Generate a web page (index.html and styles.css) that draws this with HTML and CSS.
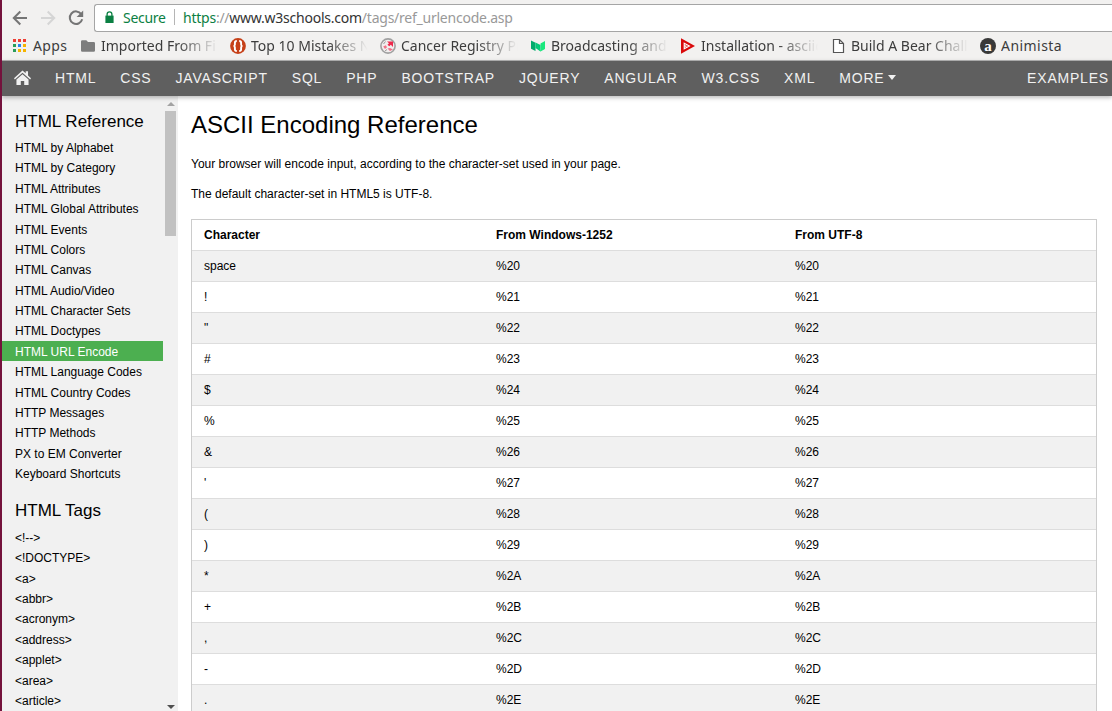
FILE: index.html
```html
<!DOCTYPE html>
<html lang="en">
<head>
<meta charset="utf-8">
<title>HTML URL Encoding Reference</title>
<link rel="stylesheet" href="styles.css">
</head>
<body>
<div class="window">
  <header class="toolbar">
    <svg class="nav-icon back" viewBox="0 0 16 16"><path d="M15 8H2.2M8.3 1.5L1.8 8l6.5 6.5"/></svg>
    <svg class="nav-icon forward" viewBox="0 0 16 16"><path d="M1 8h12.8M7.7 1.5L14.2 8l-6.5 6.5"/></svg>
    <svg class="nav-icon reload" viewBox="0 0 16 16"><path d="M13.3 4.1A6.3 6.3 0 1 0 14.2 9.3"/><path class="solid" d="M15.2 0.5v6.6H8.6z"/></svg>
    <div class="address">
      <svg class="lock" viewBox="0 0 9 12"><path d="M0.4 4.6h8.2V12H.4z" fill="#0b8043"/><path d="M2.1 5V3.2a2.4 2.4 0 0 1 4.8 0V5" fill="none" stroke="#0b8043" stroke-width="1.3"/></svg>
      <span class="secure">Secure</span>
      <span class="divider"></span>
      <span class="url"><span class="scheme">https</span><span class="dim">://</span><span class="host">www.w3schools.com</span><span class="dim path">/tags/ref_urlencode.asp</span></span>
    </div>
  </header>
  <nav class="bookmarks">
    <a class="apps"><svg viewBox="0 0 13 13"><g fill="#ee3e34"><path d="M0 0h3v3H0zM5 0h3v3H5zM10 0h3v3h-3z"/></g><path d="M0 5h3v3H0zM0 10h3v3H0z" fill="#2a9d5a"/><path d="M5 5h3v3H5z" fill="#2a84f0"/><path d="M10 5h3v3h-3zM5 10h3v3H5zM10 10h3v3h-3z" fill="#f5b400"/></svg><span>Apps</span></a>
    <a class="bookmark"><svg viewBox="0 0 16 16"><path d="M1 3.5q0-1.3 1.3-1.3h4l1.7 1.8h5.7q1.3 0 1.3 1.3v7.2q0 1.3-1.3 1.3H2.3Q1 13.8 1 12.5z" fill="#7d7d7d"/></svg><span class="label">Imported From Fi</span></a>
    <a class="bookmark"><svg viewBox="0 0 16 16"><circle cx="8" cy="8" r="7.9" fill="#c64018"/><path d="M6.8 3Q4.900 3 4.900 4.800v1.700Q4.900 8 3.500 8q1.400 0 1.400 1.500v1.700Q4.900 13 6.800 13M9.200 3q1.900 0 1.900 1.800v1.700Q11.100 8 12.500 8q-1.400 0-1.400 1.500v1.700q0 1.800-1.900 1.800" fill="none" stroke="#fff" stroke-width="1.900"/></svg><span class="label">Top 10 Mistakes No</span></a>
    <a class="bookmark"><svg viewBox="0 0 16 16"><circle cx="8" cy="8" r="7.100" fill="#f2eeee" stroke="#a0a0a0" stroke-width="1.600"/><path d="M7 3.500h6v5.500l-2.200-2.300-1.500 1.500-1.800-1.500 1.500-1.500z" fill="#ee2a4c"/><path d="M3.200 8.500l2.600-1.300 1.200 2L5 11zM7.500 10.500l2.500-.5 3 1.500-3 1.500z" fill="#f07488"/><path d="M3.500 6l2-2.500M5 13l2-1.500" stroke="#999" fill="none"/></svg><span class="label">Cancer Registry Pr</span></a>
    <a class="bookmark"><svg viewBox="0 0 16 16"><path d="M1 2.500l4.500 2.300V13L1 10.700z" fill="#00ab6c"/><path d="M5.500 4.500l5 2.500v6.500L5.500 10z" fill="#00c878"/><path d="M5.500 4.800L10.500 12.800V5.500L15 3v8l-4.500 2.500z" fill="#19e87c"/></svg><span class="label">Broadcasting and</span></a>
    <a class="bookmark"><svg viewBox="0 0 16 16"><path d="M1 .2L15 8 1 15.800z" fill="#d9090b"/><path d="M4.200 5.200L9.400 8l-5.200 2.800z" fill="none" stroke="#fff" stroke-width="1.100"/><path d="M4 7.300l2.500.8L4 9" fill="none" stroke="#fff" stroke-width=".8"/></svg><span class="label">Installation - asciid</span></a>
    <a class="bookmark"><svg viewBox="0 0 16 16"><path d="M3.500 1.500h6l4 4v9h-10zM9.500 1.500v4h4" fill="#fff" stroke="#555" stroke-width="1.200"/></svg><span class="label">Build A Bear Chall</span></a>
    <a class="bookmark"><svg viewBox="0 0 16 16"><circle cx="8" cy="8" r="8" fill="#393939"/><text x="8" y="12.500" text-anchor="middle" class="favicon-letter">a</text></svg><span class="label animista">Animista</span></a>
  </nav>
  <nav class="topnav">
    <a class="home"><svg viewBox="0 0 16 14"><path d="M8 .3l3 2.800V1h2.200v4.200L16 7.800l-.8 1L8 2.500.8 8.800 0 7.800z"/><path d="M8 3.900l5.700 5V14H9.600v-3.600H6.400V14H2.300V8.900z"/></svg></a>
    <a>HTML</a><a>CSS</a><a>JAVASCRIPT</a><a>SQL</a><a>PHP</a><a>BOOTSTRAP</a><a>JQUERY</a><a>ANGULAR</a><a>W3.CSS</a><a>XML</a><a class="more">MORE<i class="caret"></i></a><a class="examples">EXAMPLES</a>
  </nav>
  <div class="page">
    <aside class="sidebar">
      <div class="menu">
        <h2>HTML Reference</h2>
        <a>HTML by Alphabet</a><a>HTML by Category</a><a>HTML Attributes</a><a>HTML Global Attributes</a><a>HTML Events</a><a>HTML Colors</a><a>HTML Canvas</a><a>HTML Audio/Video</a><a>HTML Character Sets</a><a>HTML Doctypes</a><a class="active">HTML URL Encode</a><a>HTML Language Codes</a><a>HTML Country Codes</a><a>HTTP Messages</a><a>HTTP Methods</a><a>PX to EM Converter</a><a>Keyboard Shortcuts</a>
        <h2 class="second">HTML Tags</h2>
        <a>&lt;!--&gt;</a><a>&lt;!DOCTYPE&gt;</a><a>&lt;a&gt;</a><a>&lt;abbr&gt;</a><a>&lt;acronym&gt;</a><a>&lt;address&gt;</a><a>&lt;applet&gt;</a><a>&lt;area&gt;</a><a>&lt;article&gt;</a>
      </div>
      <div class="scrollbar"><i class="up"></i><div class="thumb"></div><i class="down"></i></div>
    </aside>
    <main class="content">
      <h1>ASCII Encoding Reference</h1>
      <p>Your browser will encode input, according to the character-set used in your page.</p>
      <p>The default character-set in HTML5 is UTF-8.</p>
      <div class="table">
        <div class="row head"><span>Character</span><span>From Windows-1252</span><span>From UTF-8</span></div>
        <div class="row"><span>space</span><span>%20</span><span>%20</span></div>
        <div class="row"><span>!</span><span>%21</span><span>%21</span></div>
        <div class="row"><span>"</span><span>%22</span><span>%22</span></div>
        <div class="row"><span>#</span><span>%23</span><span>%23</span></div>
        <div class="row"><span>$</span><span>%24</span><span>%24</span></div>
        <div class="row"><span>%</span><span>%25</span><span>%25</span></div>
        <div class="row"><span>&amp;</span><span>%26</span><span>%26</span></div>
        <div class="row"><span>'</span><span>%27</span><span>%27</span></div>
        <div class="row"><span>(</span><span>%28</span><span>%28</span></div>
        <div class="row"><span>)</span><span>%29</span><span>%29</span></div>
        <div class="row"><span>*</span><span>%2A</span><span>%2A</span></div>
        <div class="row"><span>+</span><span>%2B</span><span>%2B</span></div>
        <div class="row"><span>,</span><span>%2C</span><span>%2C</span></div>
        <div class="row"><span>-</span><span>%2D</span><span>%2D</span></div>
        <div class="row"><span>.</span><span>%2E</span><span>%2E</span></div>
      </div>
    </main>
  </div>
</div>
</body>
</html>
```

FILE: styles.css
```css
* { box-sizing: border-box; }
body { margin: 0; height: 711px; overflow: hidden; background: #fff; font: 12px "Liberation Sans", Arial, sans-serif; color: #000; }
.window { height: 711px; display: flex; flex-direction: column; border-left: 2px solid #74123c; overflow: hidden; }

/* Browser toolbar */
.toolbar { flex: none; height: 32px; padding: 4px 0 0 11px; display: flex; background: #f2f1f0; font-family: "Noto Sans", "Open Sans", sans-serif; }
.nav-icon { flex: none; width: 16px; height: 16px; margin: 6px 12px 0 0; fill: none; stroke: #757575; stroke-width: 2; }
.nav-icon.forward { stroke: #d5d5d5; }
.nav-icon.reload { margin-right: 10px; }
.nav-icon .solid { fill: #757575; stroke: none; }
.back { margin-left: -1px; }
.address { flex: 1; height: 28px; padding: 0 0 2px 10px; display: flex; align-items: center; background: #fff; border: 1px solid #a5a5a5; border-right: 0; border-radius: 3px 0 0 3px; font-size: 14px; white-space: nowrap; }
.lock { flex: none; width: 9px; height: 12px; }
.secure { width: 51px; margin-left: 9px; color: #0b8043; letter-spacing: -.3px; }
.divider { width: 1px; height: 16px; margin-right: 8px; background: #b5b5b5; }
.url { letter-spacing: -.24px; color: #333; }
.scheme { color: #0b8043; }
.dim { color: #999; }

/* Bookmarks bar */
.bookmarks { flex: none; height: 28px; padding-bottom: 1px; display: flex; align-items: center; background: #f2f1f0; font-family: "Noto Sans", "Open Sans", sans-serif; font-size: 14px; color: #3c3c3c; }
.bookmarks span { margin-top: -1px; }
.apps { flex: none; width: 78px; padding-left: 11px; display: flex; align-items: center; gap: 7px; letter-spacing: .4px; }
.apps svg { width: 13px; height: 13px; }
.bookmark { flex: none; width: 150px; display: flex; align-items: center; gap: 5px; }
.bookmark svg { flex: none; width: 16px; height: 16px; }
.label { width: 117px; overflow: hidden; white-space: nowrap; -webkit-mask-image: linear-gradient(to right, #000 76px, transparent 117px); mask-image: linear-gradient(to right, #000 76px, transparent 117px); }
.animista { letter-spacing: .45px; -webkit-mask-image: none; mask-image: none; }
.favicon-letter { font: bold 15px "Liberation Serif", serif; fill: #fff; }

/* Site navigation */
.topnav { flex: none; position: relative; z-index: 1; height: 36px; padding-bottom: 2px; display: flex; align-items: center; background: #5f5f5f; border-top: 1px solid #aaa; box-shadow: 0 2px 4px rgba(0,0,0,.25); color: #f1f1f1; font-size: 14px; letter-spacing: .8px; }
.topnav a { flex: none; padding: 0 12px; }
.topnav .home { width: 41px; height: 15px; }
.home svg { display: block; width: 17px; height: 15px; fill: #f1f1f1; }
.topnav .more { display: flex; align-items: center; gap: 4px; }
.caret { border: 4.5px solid transparent; border-top: 5px solid #f1f1f1; border-bottom: 0; }
.topnav .examples { margin-left: auto; padding-right: 3px; }

/* Reference menu */
.page { flex: 1; display: flex; min-height: 0; }
.sidebar { flex: none; width: 176px; display: flex; background: #f1f1f1; }
.menu { width: 161px; overflow: hidden; }
.menu h2 { margin: 0; padding: 16px 0 0 13px; height: 41px; font-size: 17px; font-weight: 400; line-height: 20px; }
.menu h2.second { height: 43.6px; padding-top: 18px; }
.menu a { display: block; height: 20.39px; padding-left: 13px; line-height: 22.39px; }
.menu .active { color: #fff; background: #4caf50; }
.scrollbar { width: 15px; padding: 6px 2px 2px; display: flex; flex-direction: column; align-items: center; }
.up { border: 4px solid transparent; border-top: 0; border-bottom: 4px solid #a3a3a3; }
.thumb { width: 11px; height: 125px; margin-top: 5px; background: #c1c1c1; }
.down { margin-top: auto; border: 4px solid transparent; border-bottom: 0; border-top: 4px solid #505050; }

/* Encoding table */
.content { flex: 1; padding: 11px 15px 0 13px; }
h1 { margin: 0 0 12px; font-size: 24px; font-weight: 400; line-height: 36px; }
p { margin: 0; height: 30px; line-height: 18px; }
.content p:nth-of-type(2) { height: 33px; }
.table { margin-top: 1px; border: 1px solid #ccc; }
.row { height: 31px; display: grid; grid-template-columns: 292px 299px 1fr; padding-left: 12px; line-height: 30px; border-bottom: 1px solid #ddd; }
.row:nth-child(even) { background: #f1f1f1; }
.head { font-weight: 700; }
```
